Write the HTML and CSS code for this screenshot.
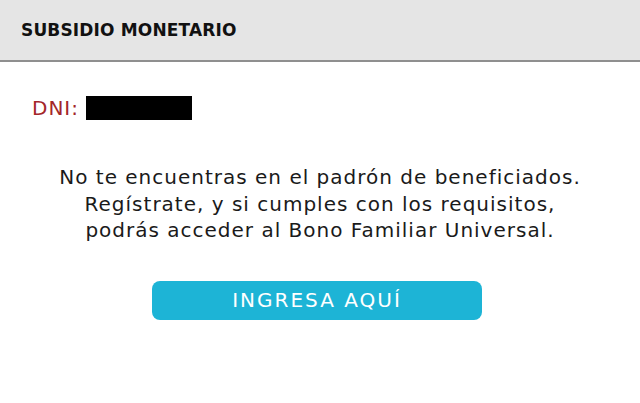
FILE: index.html
```html
<!DOCTYPE html>
<html lang="es">
<head>
<meta charset="utf-8">
<link rel="stylesheet" href="styles.css">
</head>
<body>
<header class="header">
  <h1 class="title">SUBSIDIO MONETARIO</h1>
</header>
<main class="content">
  <div class="dni">
    <span class="dni-label">DNI:</span>
    <span class="dni-mask"></span>
  </div>
  <p class="message">No te encuentras en el padrón de beneficiados.<br>Regístrate, y si cumples con los requisitos,<br>podrás acceder al Bono Familiar Universal.</p>
  <div class="actions">
    <a class="button" href="#">INGRESA AQUÍ</a>
  </div>
</main>
</body>
</html>
```

FILE: styles.css
```css
html, body {
  margin: 0;
  padding: 0;
  background: #ffffff;
  font-family: "DejaVu Sans", "Liberation Sans", sans-serif;
}
.header {
  background: #e5e5e5;
  height: 60px;
  border-bottom: 2px solid #8f8f8f;
  display: flex;
  align-items: center;
  padding-left: 21px;
}
.title {
  margin: 0;
  font-size: 17px;
  font-weight: 700;
  letter-spacing: 0.15px;
  color: #111;
}
.content {
  padding: 33px 0 0 0;
}
.dni {
  display: flex;
  align-items: center;
  gap: 7px;
  padding-left: 32px;
  height: 26px;
}
.dni-label {
  color: #a3262a;
  font-size: 20px;
  letter-spacing: 1px;
}
.dni-mask {
  display: inline-block;
  width: 106px;
  height: 24px;
  background: #000;
}
.message {
  margin: 43px 0 0 0;
  text-align: center;
  font-size: 20px;
  letter-spacing: 1px;
  line-height: 26.5px;
  color: #1a1a1a;
}
.actions {
  display: flex;
  justify-content: center;
  margin-top: 37px;
}
.button {
  display: flex;
  align-items: center;
  justify-content: center;
  width: 330px;
  height: 39px;
  border-radius: 8px;
  background: #1db4d6;
  color: #fff;
  text-decoration: none;
  font-size: 20px;
  letter-spacing: 2px;
  margin-right: 6px;
}
```
